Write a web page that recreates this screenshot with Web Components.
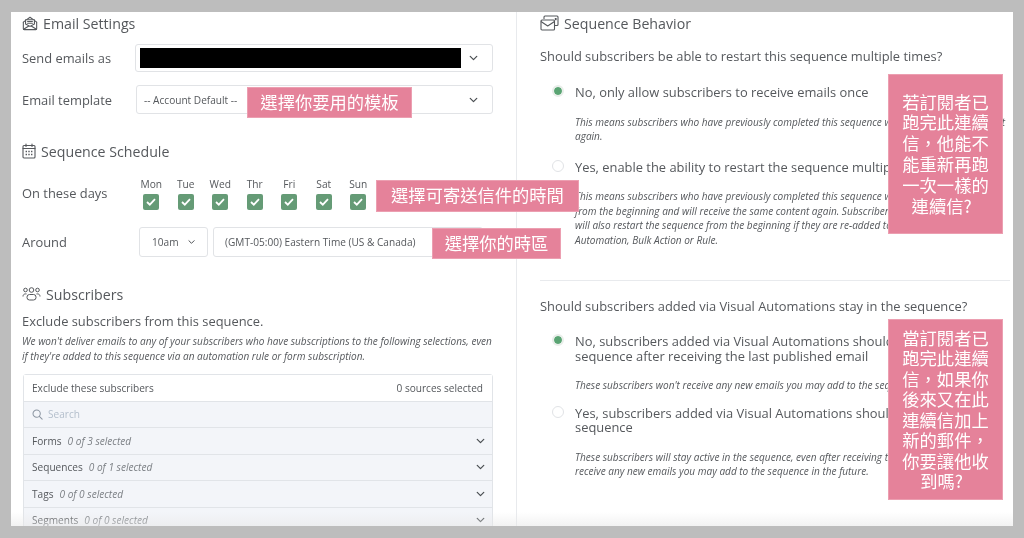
<!DOCTYPE html>
<html lang="en">
<head>
<meta charset="utf-8">
<title>Sequence settings</title>
<style>
  html, body { margin: 0; height: 100%; }
  body {
    background: #bdbdbd;
    font-family: "Open Sans", "Noto Sans CJK TC", sans-serif;
    color: #55585c;
    overflow: hidden;
  }
</style>
</head>
<body>
<settings-page>
  <email-settings slot="left"></email-settings>
  <sequence-schedule slot="left"></sequence-schedule>
  <subscriber-filter slot="left"></subscriber-filter>
  <sequence-behavior slot="right"></sequence-behavior>

  <note-box slot="notes" style="left:236px;top:75px;width:165px;height:31px;padding-bottom:1px">選擇你要用的模板</note-box>
  <note-box slot="notes" style="left:365px;top:168px;width:203px;height:32px;padding-bottom:1px">選擇可寄送信件的時間</note-box>
  <note-box slot="notes" style="left:421px;top:216px;width:129px;height:31px;padding-bottom:1px">選擇你的時區</note-box>
  <note-box slot="notes" style="left:877px;top:62px;width:115px;height:160px">若訂閱者已<br>跑完此連續<br>信，他能不<br>能重新再跑<br>一次一樣的<br>連續信?&nbsp;&nbsp;</note-box>
  <note-box slot="notes" style="left:877px;top:307px;width:115px;height:181px;line-height:20.500px">當訂閱者已<br>跑完此連續<br>信，如果你<br>後來又在此<br>連續信加上<br>新的郵件，<br>你要讓他收<br>到嗎?&nbsp;&nbsp;</note-box>
</settings-page>

<script>
const ICONS = {
  mail: `<svg width="16" height="15" viewBox="0 0 18 16" fill="none" stroke="#55585c" stroke-width="1.2" stroke-linejoin="round" stroke-linecap="round">
    <path d="M1.500 6.500v7.400a1 1 0 0 0 1 1h13a1 1 0 0 0 1-1V6.500"/>
    <path d="M1.500 6.500 9 1l7.500 5.500"/>
    <path d="M1.800 14.500 9 10l7.200 4.500"/>
    <path d="M4 8.500V3.800h10v4.700L9 11.200z" fill="#fff"/>
    <path d="M6.300 5.800h5.400M6.300 7.800h5.400"/>
  </svg>`,
  calendar: `<svg width="14" height="16" viewBox="0 0 14 16" fill="none" stroke="#55585c" stroke-width="1.1" stroke-linecap="round">
    <rect x="1" y="2.500" width="12" height="12.500" rx="1"/>
    <path d="M1 5.500h12M4 1v2.500M10 1v2.500"/>
    <path d="M3.600 8.500h1.400M6.300 8.500h1.400M9 8.500h1.400M3.600 11.500h1.400M6.300 11.500h1.400M9 11.500h1.400" stroke-width="1.500" stroke-linecap="butt"/>
  </svg>`,
  users: `<svg width="19" height="14" viewBox="0 0 19 14" fill="none" stroke="#55585c" stroke-width="1">
    <circle cx="3.500" cy="3" r="1.800"/>
    <circle cx="9.500" cy="3" r="2.300"/>
    <circle cx="15.500" cy="3" r="1.800"/>
    <path d="M1 9.500c0-1.600 1-2.600 2.500-2.600h1M18 9.500c0-1.600-1-2.600-2.500-2.600h-1"/>
    <rect x="5" y="7.500" width="9" height="5.500" rx="2.500"/>
  </svg>`,
  inbox: `<svg width="19" height="16" viewBox="0 0 19 16" fill="none" stroke="#55585c" stroke-width="1.1" stroke-linejoin="round">
    <path d="M4 4V2a1 1 0 0 1 1-1h12a1 1 0 0 1 1 1v7.500a1 1 0 0 1-1 1h-2.500"/>
    <rect x="1" y="5" width="13.500" height="10" rx="1"/>
    <path d="M1 6.500 7.700 11l6.800-4.500"/>
    <rect x="14.800" y="3" width="1.800" height="2.200" fill="#55585c" stroke="none"/>
  </svg>`,
  chevron: `<svg width="9" height="6" viewBox="0 0 11 7" fill="none" stroke="#4a4e52" stroke-width="1.500" stroke-linecap="round" stroke-linejoin="round"><path d="M1.500 1.500 5.500 5.500 9.500 1.500"/></svg>`,
  search: `<svg width="11" height="11" viewBox="0 0 13 13" fill="none" stroke="#8b95a1" stroke-width="1.200" stroke-linecap="round"><circle cx="5.500" cy="5.500" r="4.300"/><path d="M8.700 8.700 12 12"/></svg>`
};

class SettingsPage extends HTMLElement {
  constructor() {
    super();
    this.attachShadow({ mode: 'open' });
  }

  connectedCallback() {
    this.shadowRoot.innerHTML = `
      <style>
        :host { display: block; padding: 12px 11px; height: 514px; }
        .panel {
          position: relative;
          height: 514px;
          width: 1002px;
          background: #fff;
          overflow: hidden;
          display: grid;
          grid-template-columns: 506px 496px;
          filter: blur(.3px);
        }
        .col-left { padding: 0 23px 0 11px; border-right: 1px solid #e8eaed; box-sizing: border-box; }
        .col-right { padding: 0 3px 0 23px; box-sizing: border-box; }
        .fade {
          position: absolute;
          left: 0; right: 0; bottom: 0;
          height: 14px;
          background: linear-gradient(rgba(240,240,240,0), rgba(232,232,232,.55));
        }
      </style>
      <div class="panel">
        <div class="col-left"><slot name="left"></slot></div>
        <div class="col-right"><slot name="right"></slot></div>
        <div class="fade"></div>
        <slot name="notes"></slot>
      </div>
    `;
  }
}

class SectionHeading extends HTMLElement {
  constructor() {
    super();
    this.attachShadow({ mode: 'open' });
  }

  connectedCallback() {
    this.shadowRoot.innerHTML = `
      <style>
        :host {
          display: flex;
          align-items: center;
          gap: 5px;
          height: 20px;
          font-size: 14.200px;
          color: #55585c;
        }
        svg { display: block; }
      </style>
      ${ICONS[this.getAttribute('icon')]}
      <slot></slot>
    `;
  }
}

class SelectBox extends HTMLElement {
  constructor() {
    super();
    this.attachShadow({ mode: 'open' });
  }

  connectedCallback() {
    const arrow = this.hasAttribute('small') ? 'style="transform:scale(.8)"' : '';
    this.shadowRoot.innerHTML = `
      <style>
        :host {
          display: flex;
          align-items: center;
          justify-content: space-between;
          box-sizing: border-box;
          height: 29px;
          border: 1px solid #e1e3e6;
          border-radius: 3px;
          background: #fff;
          font-size: 10.100px;
          color: #55585c;
          padding: 0 14px 0 7px;
        }
        svg { display: block; flex: none; }
      </style>
      <slot></slot>
      ${this.hasAttribute('noarrow') ? '' : ICONS.chevron.replace('<svg', `<svg ${arrow}`)}
    `;
  }
}

class FormRow extends HTMLElement {
  constructor() {
    super();
    this.attachShadow({ mode: 'open' });
  }

  connectedCallback() {
    this.shadowRoot.innerHTML = `
      <style>
        :host { display: flex; align-items: center; font-size: 12.900px; color: #55585c; }
        .label { flex: none; width: var(--label-width, 113px); }
        .field { flex: 1; min-width: 0; }
      </style>
      <div class="label">${this.getAttribute('label')}</div>
      <div class="field"><slot></slot></div>
    `;
  }
}

class EmailSettings extends HTMLElement {
  constructor() {
    super();
    this.attachShadow({ mode: 'open' });
  }

  connectedCallback() {
    this.shadowRoot.innerHTML = `
      <style>
        :host { display: block; padding-top: 1px; }
        .blackout { width: 321px; height: 20px; background: #000; margin-left: -3px; }
        form-row { margin-top: 11px; }
        form-row select-box { height: 28px; }
        form-row + form-row { margin-top: 13px; --label-width: 114px; }
        form-row + form-row select-box { height: 29px; }
      </style>
      <section-heading icon="mail">Email Settings</section-heading>
      <form-row label="Send emails as">
        <select-box><div class="blackout"></div></select-box>
      </form-row>
      <form-row label="Email template">
        <select-box>-- Account Default --</select-box>
      </form-row>
    `;
  }
}

class SequenceSchedule extends HTMLElement {
  constructor() {
    super();
    this.attachShadow({ mode: 'open' });
  }

  connectedCallback() {
    const days = ['Mon', 'Tue', 'Wed', 'Thr', 'Fri', 'Sat', 'Sun'];
    this.shadowRoot.innerHTML = `
      <style>
        :host { display: block; margin-top: 27px; }
        .days-row { margin-top: 15px; --label-width: 112px; }
        .days { display: grid; grid-template-columns: repeat(7, 34.500px); width: 242px; }
        .day { display: flex; flex-direction: column; align-items: center; font-size: 10.200px; line-height: 16px; }
        .box {
          margin-top: 2px;
          width: 16px;
          height: 16px;
          border-radius: 2px;
          background: #659b76;
          display: flex;
          align-items: center;
          justify-content: center;
        }
        .around { margin-top: 17px; --label-width: 117px; }
        .time { display: flex; gap: 5px; }
        .hour { width: 69px; height: 30px; padding: 0 11px 0 12px; }
        .zone { width: 270px; height: 30px; padding: 0 11px; }
      </style>
      <section-heading icon="calendar">Sequence Schedule</section-heading>
      <form-row class="days-row" label="On these days">
        <div class="days">
          ${days.map(d => `
            <div class="day">${d}
              <div class="box"><svg width="10" height="8" viewBox="0 0 10 8" fill="none" stroke="#fff" stroke-width="1.800"><path d="M1 4 3.800 6.700 9 1.200"/></svg></div>
            </div>`).join('')}
        </div>
      </form-row>
      <form-row class="around" label="Around">
        <div class="time">
          <select-box class="hour" small>10am</select-box>
          <select-box class="zone" noarrow>(GMT-05:00) Eastern Time (US &amp; Canada)</select-box>
        </div>
      </form-row>
    `;
  }
}

class SubscriberFilter extends HTMLElement {
  constructor() {
    super();
    this.attachShadow({ mode: 'open' });
  }

  connectedCallback() {
    const rows = [
      ['Forms', '0 of 3 selected'],
      ['Sequences', '0 of 1 selected'],
      ['Tags', '0 of 0 selected'],
      ['Segments', '0 of 0 selected']
    ];
    this.shadowRoot.innerHTML = `
      <style>
        :host { display: block; margin-top: 27px; }
        .lead { margin-top: 7px; font-size: 12.900px; line-height: 20px; }
        .hint { margin-top: 3px; font-size: 10.050px; line-height: 14.500px; font-style: italic; white-space: nowrap; }
        .box { margin-top: 11px; border: 1px solid #e1e4e8; border-radius: 3px 3px 0 0; margin-left: 1px; font-size: 10.100px; }
        .row { display: flex; align-items: center; justify-content: space-between; height: 25.500px; padding: 0 9px 0 8px; border-top: 1px solid #e1e4e8; background: #f3f5f9; }
        .row:first-child { border-top: 0; background: #fff; }
        .search { justify-content: flex-start; gap: 5px; color: #b4bfcc; }
        .count { margin-left: 6px; font-style: italic; color: #7b7f84; }
        svg { display: block; flex: none; }
        span + svg { margin-right: -2px; }
      </style>
      <section-heading icon="users">Subscribers</section-heading>
      <div class="lead">Exclude subscribers from this sequence.</div>
      <div class="hint">We won't deliver emails to any of your subscribers who have subscriptions to the following selections, even<br>if they're added to this sequence via an automation rule or form subscription.</div>
      <div class="box">
        <div class="row"><span>Exclude these subscribers</span><span>0 sources selected</span></div>
        <div class="row search">${ICONS.search}<span>Search</span></div>
        ${rows.map(([name, count]) => `
          <div class="row"><span>${name}<span class="count">${count}</span></span>${ICONS.chevron}</div>`).join('')}
      </div>
    `;
  }
}

class RadioOption extends HTMLElement {
  constructor() {
    super();
    this.attachShadow({ mode: 'open' });
  }

  connectedCallback() {
    const on = this.hasAttribute('checked');
    this.shadowRoot.innerHTML = `
      <style>
        :host { display: block; padding-left: 35px; position: relative; }
        .dot {
          position: absolute;
          left: 12px;
          top: 0;
          width: 12px;
          height: 12px;
          box-sizing: border-box;
          border-radius: 50%;
          border: ${on ? '2px solid #e9eeea' : '1px solid #e1e3e6'};
          background: ${on ? '#5aa473' : '#fff'};
          background-clip: padding-box;
        }
        .text { font-size: 12.900px; line-height: 14.500px; white-space: nowrap; }
        .note { margin-top: 15px; font-size: 10.050px; line-height: 14.500px; font-style: italic; white-space: nowrap; }
      </style>
      <div class="dot"></div>
      <div class="text"><slot name="text"></slot></div>
      <div class="note"><slot name="note"></slot></div>
    `;
  }
}

class SequenceBehavior extends HTMLElement {
  constructor() {
    super();
    this.attachShadow({ mode: 'open' });
  }

  connectedCallback() {
    this.shadowRoot.innerHTML = `
      <style>
        :host { display: block; padding-top: 1px; }
        .question { font-size: 12.900px; line-height: 20px; margin-top: 13px; }
        hr { border: 0; border-top: 1px solid #e8eaed; margin: 33px 0 0; }
        hr + .question { margin-top: 15px; }
        .a1 { margin-top: 19px; }
        .a2 { margin-top: 16px; }
        .b1 { margin-top: 18px; }
        .b2 { margin-top: 13px; }
      </style>
      <section-heading icon="inbox">Sequence Behavior</section-heading>
      <div class="question">Should subscribers be able to restart this sequence multiple times?</div>
      <radio-option class="a1" checked>
        <span slot="text">No, only allow subscribers to receive emails once</span>
        <span slot="note">This means subscribers who have previously completed this sequence will not be able to receive it<br>again.</span>
      </radio-option>
      <radio-option class="a2">
        <span slot="text">Yes, enable the ability to restart the sequence multiple times</span>
        <span slot="note">This means subscribers who have previously completed this sequence will restart the sequence<br>from the beginning and will receive the same content again. Subscribers in the sequence before<br>will also restart the sequence from the beginning if they are re-added to it by Visual<br>Automation, Bulk Action or Rule.</span>
      </radio-option>
      <hr>
      <div class="question">Should subscribers added via Visual Automations stay in the sequence?</div>
      <radio-option class="b1" checked>
        <span slot="text">No, subscribers added via Visual Automations should exit the<br>sequence after receiving the last published email</span>
        <span slot="note">These subscribers won't receive any new emails you may add to the sequence.</span>
      </radio-option>
      <radio-option class="b2">
        <span slot="text">Yes, subscribers added via Visual Automations should stay in the<br>sequence</span>
        <span slot="note">These subscribers will stay active in the sequence, even after receiving the last email, and will<br>receive any new emails you may add to the sequence in the future.</span>
      </radio-option>
    `;
  }
}

class NoteBox extends HTMLElement {
  constructor() {
    super();
    this.attachShadow({ mode: 'open' });
  }

  connectedCallback() {
    this.shadowRoot.innerHTML = `
      <style>
        :host {
          position: absolute;
          display: flex;
          align-items: center;
          justify-content: center;
          text-align: center;
          box-sizing: border-box;
          background: #e5829a;
          border: 1px solid #ec9fb1;
          color: #fff;
          font-family: "Noto Sans CJK TC", sans-serif;
          font-size: 17.300px;
          line-height: 20.800px;
        }
      </style>
      <div><slot></slot></div>
    `;
  }
}

customElements.define('settings-page', SettingsPage);
customElements.define('section-heading', SectionHeading);
customElements.define('select-box', SelectBox);
customElements.define('form-row', FormRow);
customElements.define('email-settings', EmailSettings);
customElements.define('sequence-schedule', SequenceSchedule);
customElements.define('subscriber-filter', SubscriberFilter);
customElements.define('radio-option', RadioOption);
customElements.define('sequence-behavior', SequenceBehavior);
customElements.define('note-box', NoteBox);
</script>
</body>
</html>
